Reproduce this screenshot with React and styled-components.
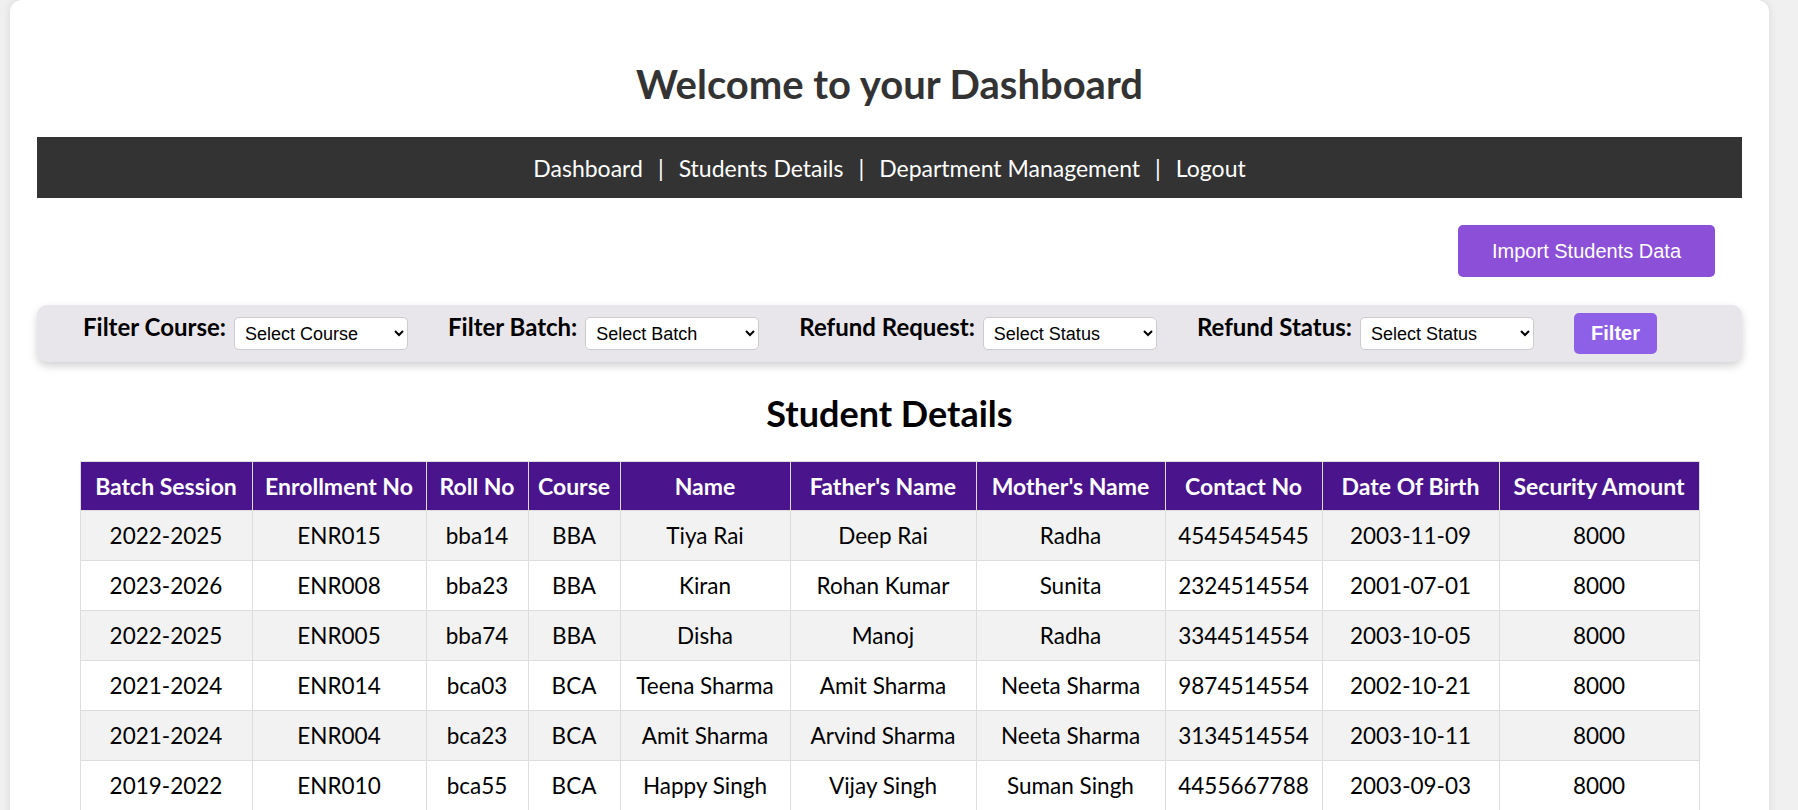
import React from "react";
import styled, { createGlobalStyle } from "styled-components";

const GlobalStyle = createGlobalStyle`
  html, body { margin: 0; padding: 0; }
  body {
    background: #f0f0f0;
    font-family: "Comic Sans MS", "Lato", sans-serif;
    color: #000;
  }
  * { box-sizing: border-box; }
`;

const Card = styled.div`
  margin-left: 10px;
  width: 1759px;
  background: #fff;
  border-radius: 12px;
  box-shadow: 0 0 10px rgba(0, 0, 0, 0.1);
  padding: 60px 27px 40px;
  display: flow-root;
`;

const Title = styled.h1`
  margin: 0 0 29px;
  text-align: center;
  color: #333;
  font-size: 40px;
  line-height: 48px;
  font-weight: 700;
`;

const Nav = styled.nav`
  height: 61px;
  background: #333;
  display: flex;
  align-items: center;
  justify-content: center;
  gap: 15px;
  color: #fff;
  font-size: 23px;
`;

const NavLink = styled.a`
  color: #fff;
  text-decoration: none;
`;

const Sep = styled.span`
  color: #fff;
`;

const ActionRow = styled.div`
  display: flex;
  justify-content: flex-end;
  padding-right: 27px;
  margin-top: 27px;
`;

const PrimaryButton = styled.button`
  height: 52px;
  padding: 0 34px;
  border: none;
  border-radius: 5px;
  background: #8c4fd8;
  color: #fff;
  font-family: "Liberation Sans", Arial, sans-serif;
  font-size: 20px;
  cursor: pointer;
`;

const FilterBar = styled.div`
  margin-top: 28px;
  height: 57px;
  background: #e8e6ea;
  border-radius: 10px;
  box-shadow: 0 4px 8px rgba(0, 0, 0, 0.18);
  display: flex;
  align-items: center;
  justify-content: space-between;
  padding: 0 85px 0 46px;
`;

const FilterGroup = styled.div`
  display: flex;
  align-items: center;
  gap: 8px;
`;

const FilterLabel = styled.label`
  font-size: 24px;
  font-weight: 700;
  color: #000;
  margin-bottom: 14px;
`;

const Select = styled.select`
  width: 174px;
  height: 33px;
  padding: 0 6px;
  border: 1px solid #ccc;
  border-radius: 5px;
  background: #fff;
  font-family: "Liberation Sans", Arial, sans-serif;
  font-size: 18px;
  color: #000;
`;

const FilterButton = styled.button`
  height: 41px;
  padding: 0 17px;
  border: none;
  border-radius: 5px;
  background: #8e60e8;
  color: #fff;
  font-family: "Liberation Sans", Arial, sans-serif;
  font-weight: 700;
  font-size: 20px;
  cursor: pointer;
`;

const SectionTitle = styled.h2`
  margin: 29px 0 26px;
  text-align: center;
  font-size: 36px;
  line-height: 44px;
  font-weight: 700;
  color: #000;
`;

const Table = styled.table`
  width: 95%;
  margin: 0 auto;
  border-collapse: collapse;
  table-layout: fixed;
`;

const Col = styled.col`
  width: ${(p) => p.$w}px;
`;

const Th = styled.th`
  height: 49px;
  padding: 0 4px;
  background: #4a148c;
  color: #fff;
  font-size: 23px;
  font-weight: 700;
  text-align: center;
  border: 1px solid #ddd;
  white-space: nowrap;
`;

const Tr = styled.tr`
  background: ${(p) => (p.$alt ? "#f2f2f2" : "#fff")};
`;

const Td = styled.td`
  height: 50px;
  padding: 0 4px;
  font-size: 22.5px;
  text-align: center;
  border: 1px solid #ddd;
  white-space: nowrap;
  color: #000;
`;

const columns = [
  { label: "Batch Session", w: 172 },
  { label: "Enrollment No", w: 174 },
  { label: "Roll No", w: 102 },
  { label: "Course", w: 92 },
  { label: "Name", w: 170 },
  { label: "Father's Name", w: 186 },
  { label: "Mother's Name", w: 189 },
  { label: "Contact No", w: 157 },
  { label: "Date Of Birth", w: 177 },
  { label: "Security Amount", w: 200 },
];

const rows = [
  ["2022-2025", "ENR015", "bba14", "BBA", "Tiya Rai", "Deep Rai", "Radha", "4545454545", "2003-11-09", "8000"],
  ["2023-2026", "ENR008", "bba23", "BBA", "Kiran", "Rohan Kumar", "Sunita", "2324514554", "2001-07-01", "8000"],
  ["2022-2025", "ENR005", "bba74", "BBA", "Disha", "Manoj", "Radha", "3344514554", "2003-10-05", "8000"],
  ["2021-2024", "ENR014", "bca03", "BCA", "Teena Sharma", "Amit Sharma", "Neeta Sharma", "9874514554", "2002-10-21", "8000"],
  ["2021-2024", "ENR004", "bca23", "BCA", "Amit Sharma", "Arvind Sharma", "Neeta Sharma", "3134514554", "2003-10-11", "8000"],
  ["2019-2022", "ENR010", "bca55", "BCA", "Happy Singh", "Vijay Singh", "Suman Singh", "4455667788", "2003-09-03", "8000"],
];

const navItems = ["Dashboard", "Students Details", "Department Management", "Logout"];

const filters = [
  { label: "Filter Course:", placeholder: "Select Course" },
  { label: "Filter Batch:", placeholder: "Select Batch" },
  { label: "Refund Request:", placeholder: "Select Status" },
  { label: "Refund Status:", placeholder: "Select Status" },
];

export default function App() {
  return (
    <>
      <GlobalStyle />
      <Card>
        <Title>Welcome to your Dashboard</Title>
        <Nav>
          {navItems.map((item, i) => (
            <React.Fragment key={item}>
              {i > 0 && <Sep>|</Sep>}
              <NavLink href="#">{item}</NavLink>
            </React.Fragment>
          ))}
        </Nav>
        <ActionRow>
          <PrimaryButton>Import Students Data</PrimaryButton>
        </ActionRow>
        <FilterBar>
          {filters.map((f) => (
            <FilterGroup key={f.label}>
              <FilterLabel>{f.label}</FilterLabel>
              <Select defaultValue="">
                <option value="">{f.placeholder}</option>
              </Select>
            </FilterGroup>
          ))}
          <FilterButton>Filter</FilterButton>
        </FilterBar>
        <SectionTitle>Student Details</SectionTitle>
        <Table>
          <colgroup>
            {columns.map((c) => (
              <Col key={c.label} $w={c.w} />
            ))}
          </colgroup>
          <thead>
            <tr>
              {columns.map((c) => (
                <Th key={c.label}>{c.label}</Th>
              ))}
            </tr>
          </thead>
          <tbody>
            {rows.map((r, i) => (
              <Tr key={i} $alt={i % 2 === 0}>
                {r.map((cell, j) => (
                  <Td key={j}>{cell}</Td>
                ))}
              </Tr>
            ))}
          </tbody>
        </Table>
      </Card>
    </>
  );
}
